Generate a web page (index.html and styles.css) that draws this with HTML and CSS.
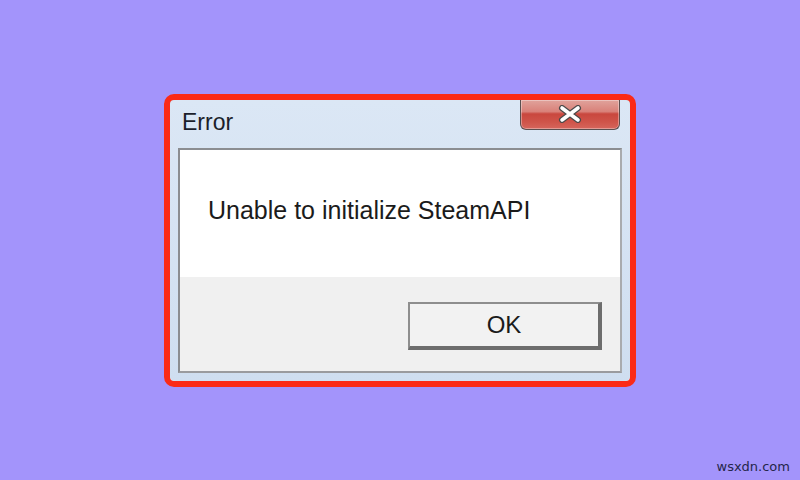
FILE: index.html
```html
<!DOCTYPE html>
<html>
<head>
<meta charset="utf-8">
<link rel="stylesheet" href="styles.css">
</head>
<body>
<div class="stage">
  <div class="highlight">
    <div class="window">
      <div class="titlebar">
        <span class="title">Error</span>
        <div class="close">
          <svg width="26" height="18" viewBox="0 0 26 18">
            <path d="M5 3 L21 15 M21 3 L5 15" stroke="#4a4a4a" stroke-width="6" stroke-linecap="round"/>
            <path d="M5 3 L21 15 M21 3 L5 15" stroke="#ffffff" stroke-width="3.6" stroke-linecap="round"/>
          </svg>
        </div>
      </div>
      <div class="client">
        <div class="message">Unable to initialize SteamAPI</div>
        <div class="actions">
          <div class="btn">OK</div>
        </div>
      </div>
    </div>
  </div>
  <div class="watermark">wsxdn.com</div>
</div>
</body>
</html>
```
FILE: styles.css
```css
html, body {
  margin: 0;
  padding: 0;
}
body {
  width: 800px;
  height: 480px;
  background: #a394fb;
  font-family: "Liberation Sans", Arial, sans-serif;
  overflow: hidden;
}
.stage {
  position: relative;
  width: 800px;
  height: 480px;
  display: flex;
  align-items: center;
  justify-content: center;
}
.highlight {
  width: 460px;
  height: 281px;
  border: 6px solid #fb2a17;
  border-radius: 10px;
  background: #d5e3f3;
  display: flex;
}
.window {
  flex: 1;
  display: flex;
  flex-direction: column;
  padding: 0 8px 8px 8px;
  border-radius: 6px;
  background: linear-gradient(#dbe7f5, #cfdef0);
}
.titlebar {
  height: 48px;
  display: flex;
  justify-content: space-between;
  align-items: flex-start;
  position: relative;
}
.title {
  margin-top: 9px;
  margin-left: 4px;
  font-size: 23px;
  color: #1b1e2b;
}
.close {
  width: 98px;
  height: 29px;
  margin-right: 2px;
  border: 1px solid #5a5050;
  border-top: none;
  border-radius: 0 0 6px 6px;
  background: linear-gradient(#e0a39c 0%, #d98179 40%, #c9473e 48%, #cf5449 75%, #d6665c 100%);
  display: flex;
  align-items: center;
  justify-content: center;
  box-shadow: inset 0 0 0 1px rgba(255,255,255,0.35);
}
.client {
  flex: 1;
  border: 2px solid #8b8d91;
  border-right-color: #a9abae;
  border-bottom-color: #9a9b9e;
  display: flex;
  flex-direction: column;
}
.message {
  height: 127px;
  background: #ffffff;
  box-sizing: border-box;
  padding: 46px 0 0 28px;
  font-size: 25px;
  line-height: 28px;
  color: #1b1b1b;
}
.actions {
  flex: 1;
  background: #f0f0f0;
  display: flex;
  justify-content: flex-end;
  align-items: flex-start;
  padding: 25px 18px 0 0;
}
.btn {
  width: 188px;
  height: 42px;
  border: 2px solid #8e8e8e;
  border-right: 4px solid #6d6d6d;
  border-bottom: 4px solid #6d6d6d;
  background: #f2f2f2;
  display: flex;
  align-items: center;
  justify-content: center;
  font-size: 24px;
  color: #1b1b1b;
}
.watermark {
  position: absolute;
  right: 10px;
  bottom: 6px;
  font-size: 13px;
  color: #25264a;
  font-family: "DejaVu Sans", sans-serif;
}
```
